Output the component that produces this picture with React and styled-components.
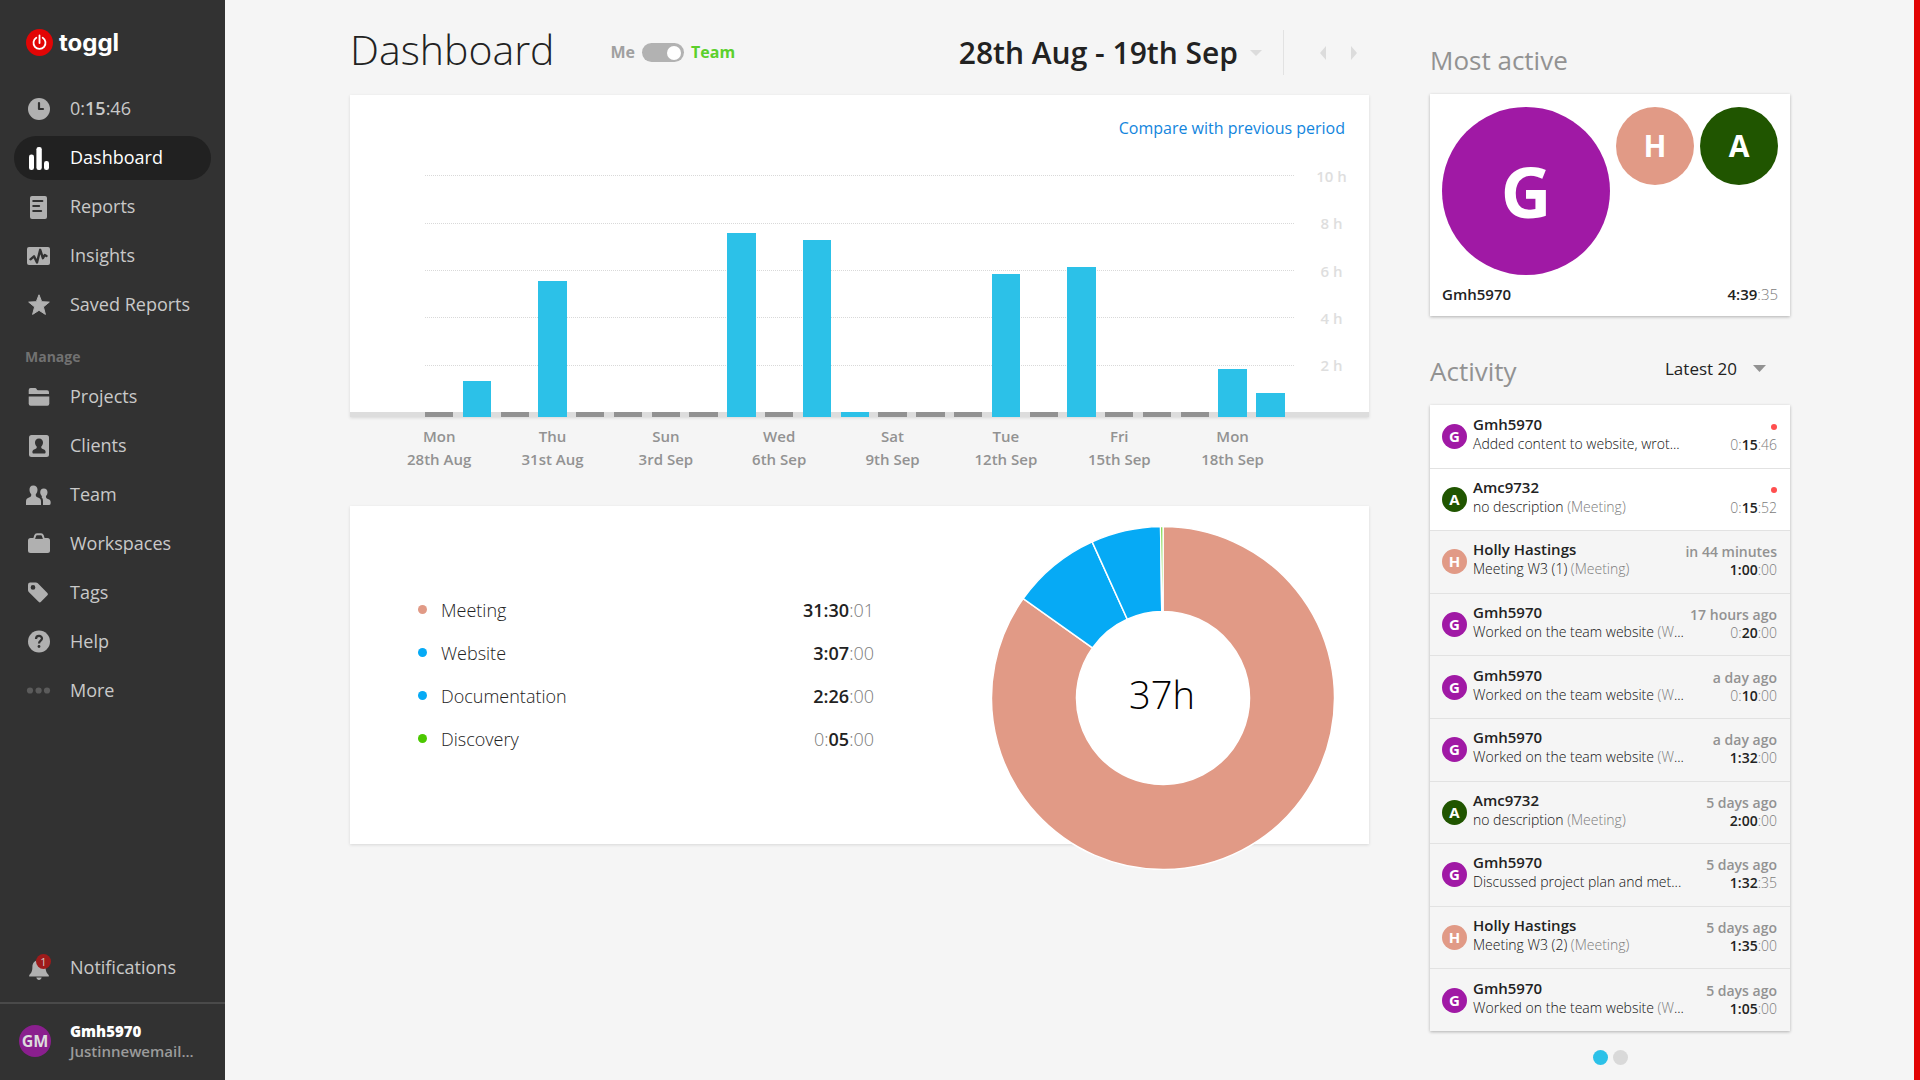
import React, { useState } from "react";
import styled, { createGlobalStyle } from "styled-components";

const GlobalStyle = createGlobalStyle`
  *, *::before, *::after { box-sizing: border-box; }
  body {
    margin: 0;
    background: #f5f5f5;
    color: #222;
    font-family: "Open Sans", "Noto Sans", sans-serif;
    font-size: 18px;
  }
  button, select, input { font: inherit; color: inherit; margin: 0; }
  button { border: 0; padding: 0; background: none; cursor: pointer; }
  h1, h2, p, ul, ol { margin: 0; padding: 0; font-weight: inherit; }
  ul, ol { list-style: none; }
  a { text-decoration: none; color: inherit; }
  svg { display: block; }
`;

const Page = styled.div`
  display: flex;
  min-height: 100vh;
  border-right: 6px solid #e20505;
`;

/* Sidebar */

const Sidebar = styled.nav`
  flex: 0 0 225px;
  display: flex;
  flex-direction: column;
  background: #323232;
  color: #c9c9c9;
`;

const Brand = styled.a`
  display: flex;
  align-items: center;
  gap: 6px;
  padding: 29px 26px 31px;
  color: #fff;
  font: 700 24px/27px Inter, "Open Sans", sans-serif;
`;

const NavList = styled.ul`
  display: flex;
  flex-direction: column;
  gap: 5px;
  margin: 0 14px;
`;

const NavLink = styled.a`
  display: flex;
  align-items: center;
  gap: 19px;
  height: 44px;
  padding: 0 13px;
  border-radius: 22px;
  line-height: 24px;
  white-space: nowrap;
  background: ${(p) => (p.$active ? "#212121" : "transparent")};
  color: ${(p) => (p.$active ? "#fff" : "inherit")};
`;

const NavLabel = styled.span`
  padding-bottom: 2px;
`;

const NavIcon = styled.svg`
  flex: none;
  width: 24px;
  height: 24px;
  overflow: visible;
  color: ${(p) => (p.$active ? "#fff" : p.$dim ? "#5b5b5b" : "#b0b0b0")};
`;

const NavHeading = styled.h2`
  padding: 20px 25px 8px;
  color: #717171;
  font-size: 14px;
  font-weight: 700;
  line-height: 20px;
`;

const Strong = styled.b`
  font-weight: 600;
`;

const SidebarFoot = styled.div`
  margin-top: auto;
`;

const IconHolder = styled.span`
  position: relative;
`;

const Count = styled.span`
  position: absolute;
  top: -2px;
  right: 0;
  width: 15px;
  height: 15px;
  border-radius: 50%;
  background: #9e1b1b;
  color: #d5c5c5;
  font-size: 11px;
  line-height: 15px;
  text-align: center;
`;

const Account = styled.a`
  display: flex;
  align-items: center;
  gap: 19px;
  margin-top: 12px;
  padding: 17px 19px 19px;
  border-top: 2px solid #4a4a4a;
  color: #9b9b9b;
  font-size: 15px;
  font-weight: 600;
  line-height: 20px;
`;

const AccountName = styled.b`
  display: block;
  color: #fff;
`;

/* Shared */

const Avatar = styled.span`
  flex: none;
  display: flex;
  align-items: center;
  justify-content: center;
  width: ${(p) => p.$size}px;
  height: ${(p) => p.$size}px;
  border-radius: 50%;
  background: ${(p) => p.$color};
  color: ${(p) => p.$ink || "#fff"};
  font-size: ${(p) => p.$font}px;
  font-weight: 700;
  line-height: 1;
`;

const Muted = styled.span`
  color: #7c7c7c;
  font-weight: 300;
`;

/* Main column */

const Content = styled.main`
  flex: 1;
  display: flex;
  align-items: flex-start;
  gap: 61px;
  min-width: 0;
  padding: 0 124px 15px 125px;
`;

const Report = styled.section`
  flex: 1;
  min-width: 0;
`;

const Header = styled.header`
  display: flex;
  align-items: center;
  height: 95px;
  padding: 10px 12px 0 0;
`;

const Title = styled.h1`
  padding-bottom: 8px;
  font-size: 41px;
  font-weight: 300;
  line-height: 48px;
`;

const Scope = styled.label`
  display: flex;
  align-items: center;
  gap: 7px;
  margin-left: 56px;
  font-size: 16px;
  font-weight: 700;
  line-height: 22px;
`;

const Switch = styled.input`
  appearance: none;
  display: flex;
  align-items: center;
  justify-content: flex-end;
  width: 42px;
  height: 19px;
  padding: 0 3px;
  border-radius: 10px;
  background: #b2b2b2;
  &:not(:checked) { justify-content: flex-start; }
  &::before {
    content: "";
    width: 14px;
    height: 14px;
    border-radius: 50%;
    background: #fff;
  }
`;

const ScopeName = styled.span`
  padding-bottom: 2px;
  color: ${(p) => (p.$on ? "#5bd02c" : "#a0a0a0")};
`;

const Period = styled.button`
  display: flex;
  align-items: center;
  gap: 12px;
  margin-left: auto;
  padding-top: 1px;
  font-size: 30px;
  font-weight: 600;
  line-height: 40px;
  color: #222;
`;

const Steps = styled.div`
  display: flex;
  align-items: center;
  gap: 25px;
  height: 45px;
  margin-left: 21px;
  padding-left: 36px;
  border-left: 1px solid #e2e2e2;
  color: #dcdcdc;
`;

const Panel = styled.div`
  background: #fff;
  box-shadow: 0 1px 3px rgba(0, 0, 0, ${(p) => (p.$deep ? 0.28 : 0.12)});
`;

const CompareRow = styled.div`
  display: flex;
  justify-content: flex-end;
  height: 57px;
  padding: 21px 24px 0 0;
`;

const CompareLink = styled.a`
  color: #1285dd;
  font-size: 16px;
  line-height: 24px;
`;

const Plot = styled.div`
  display: grid;
  grid-template-rows: 260px 5px;
  grid-template-columns: 75px minmax(0, 1fr) 75px;
`;

const GridLines = styled.div`
  grid-area: 1 / 2 / 2 / 4;
  display: flex;
  flex-direction: column;
  padding-bottom: 23px;
`;

const GridLine = styled.div`
  flex: 1;
  display: grid;
  grid-template-columns: minmax(0, 1fr) 75px;
  align-items: center;
  color: #dedede;
  font-size: 15px;
  font-weight: 600;
  line-height: 20px;
  text-align: center;
  &::before {
    content: "";
    border-top: 1px dotted #d9d9d9;
  }
`;

const Baseline = styled.div`
  grid-area: 2 / 1 / 3 / 4;
  background: #ddd;
`;

const dayColumns = `
  display: grid;
  grid-template-columns: repeat(23, minmax(0, 1fr));
`;

const Bars = styled.div`
  grid-area: 1 / 2 / 3 / 3;
  ${dayColumns}
  align-items: end;
`;

const Bar = styled.div`
  width: 75%;
  background: ${(p) => (p.$empty ? "#929292" : "#2cc1e8")};
`;

const DayLabels = styled.div`
  ${dayColumns}
  margin: 8px 75px 35px;
`;

const DayLabel = styled.div`
  grid-column: ${(p) => p.$day};
  width: 75%;
  display: flex;
  flex-direction: column;
  align-items: center;
  white-space: nowrap;
  color: #929292;
  font-size: 15px;
  font-weight: 600;
  line-height: 23px;
`;

const Breakdown = styled(Panel)`
  display: flex;
  align-items: center;
  height: 338px;
  padding: 0 34px 2px 68px;
  gap: 117px;
`;

const Legend = styled.table`
  flex: 1;
  border-collapse: collapse;
  font-weight: 300;
  line-height: 24px;
  th, td { height: 43px; padding: 0; }
  th { font-weight: 300; text-align: left; }
  td { text-align: right; }
`;

const LegendName = styled.span`
  display: flex;
  align-items: center;
  gap: 14px;
  &::before {
    content: "";
    width: 9px;
    height: 9px;
    border-radius: 50%;
    background: ${(p) => p.$color};
  }
`;

const Donut = styled.svg`
  flex: none;
  align-self: flex-start;
  width: 344px;
  height: 344px;
  margin-top: 20px;
`;

const Slice = styled.path`
  fill: ${(p) => p.$color};
  stroke: #fff;
  stroke-width: 1.5;
`;

const DonutTotal = styled.text`
  fill: #000;
  font-size: 38px;
  font-weight: 300;
  text-anchor: middle;
`;

/* Team column */

const TeamColumn = styled.aside`
  flex: 0 0 360px;
`;

const SectionHead = styled.div`
  display: flex;
  align-items: center;
  justify-content: space-between;
  height: 36px;
  margin: ${(p) => (p.$first ? 41 : 36)}px 24px 17px 0;
`;

const SectionTitle = styled.h2`
  padding-top: 2px;
  color: #929292;
  font-size: 26px;
  font-weight: 400;
  line-height: 34px;
`;

const People = styled(Panel)`
  padding: 13px 12px 12px;
`;

const PeopleRow = styled.div`
  display: flex;
  align-items: flex-start;
  gap: 6px;
`;

const Leader = styled.div`
  display: flex;
  justify-content: space-between;
  margin-top: 9px;
  font-size: 15px;
  font-weight: 600;
  line-height: 20px;
`;

const Picker = styled.label`
  position: relative;
  color: #929292;
`;

const PickerSelect = styled.select`
  appearance: none;
  display: block;
  width: 101px;
  height: 26px;
  padding: 0 0 2px;
  border: 0;
  background: none;
  color: #222;
  font-size: 17px;
  line-height: 24px;
`;

const PickerCaret = styled.svg`
  position: absolute;
  right: 0;
  top: 8px;
  pointer-events: none;
`;

const Feed = styled(Panel).attrs({ as: "ul" })`
  display: grid;
  grid-auto-rows: 1fr;
  min-height: 626px;
`;

const Entry = styled.li`
  display: grid;
  grid-template-columns: 25px minmax(0, 1fr) auto;
  align-items: center;
  gap: 6px;
  padding: 0 13px 0 12px;
  background: ${(p) => (p.$live ? "#fff" : "#f5f5f5")};
  font-size: 14px;
  line-height: 19px;
  white-space: nowrap;
  & + & { border-top: 1px solid #e2e2e2; }
`;

const EntryText = styled.div`
  padding-bottom: 5px;
  color: #111;
  font-weight: 300;
`;

const EntryUser = styled.p`
  color: #222;
  font-size: 15px;
  font-weight: 600;
`;

const EntrySide = styled.div`
  display: flex;
  flex-direction: column;
  align-items: flex-end;
  padding-bottom: 1px;
  line-height: 18px;
  font-weight: 600;
`;

const EntryWhen = styled.span`
  display: flex;
  align-items: center;
  height: 18px;
  color: #929292;
`;

const LiveDot = styled.span`
  width: 6px;
  height: 6px;
  border-radius: 50%;
  background: #ff4f4f;
`;

const Pager = styled.div`
  display: flex;
  justify-content: center;
  gap: 5px;
  margin-top: 19px;
`;

const PageDot = styled.button`
  width: 15px;
  height: 15px;
  border-radius: 50%;
  background: ${(p) => (p.$on ? "#2cc1e8" : "#d9d9d9")};
`;

/* Data */

const PURPLE = "#a019a5";
const SALMON = "#e19a86";
const GREEN = "#205500";

const days = [0, 36, 0, 136, 0, 0, 0, 0, 184, 0, 177, 5, 0, 0, 0, 143, 0, 150, 0, 0, 0, 48, 24];

const dayNames = [
  ["Mon", "28th Aug"],
  ["Thu", "31st Aug"],
  ["Sun", "3rd Sep"],
  ["Wed", "6th Sep"],
  ["Sat", "9th Sep"],
  ["Tue", "12th Sep"],
  ["Fri", "15th Sep"],
  ["Mon", "18th Sep"],
];

const projects = [
  { name: "Meeting", color: SALMON, time: "31:30:01", seconds: 113401 },
  { name: "Website", color: "#06aaf5", time: "3:07:00", seconds: 11220 },
  { name: "Documentation", color: "#06aaf5", time: "2:26:00", seconds: 8760 },
  { name: "Discovery", color: "#4bc800", time: "0:05:00", seconds: 300 },
];

const users = {
  G: { name: "Gmh5970", color: PURPLE },
  A: { name: "Amc9732", color: GREEN },
  H: { name: "Holly Hastings", color: SALMON },
};

const entries = [
  { user: "G", text: "Added content to website, wrot...", time: "0:15:46" },
  { user: "A", text: "no description", project: "(Meeting)", time: "0:15:52" },
  { user: "H", text: "Meeting W3 (1)", project: "(Meeting)", when: "in 44 minutes", time: "1:00:00" },
  { user: "G", text: "Worked on the team website", project: "(W", cut: true, when: "17 hours ago", time: "0:20:00" },
  { user: "G", text: "Worked on the team website", project: "(W", cut: true, when: "a day ago", time: "0:10:00" },
  { user: "G", text: "Worked on the team website", project: "(W", cut: true, when: "a day ago", time: "1:32:00" },
  { user: "A", text: "no description", project: "(Meeting)", when: "5 days ago", time: "2:00:00" },
  { user: "G", text: "Discussed project plan and met...", when: "5 days ago", time: "1:32:35" },
  { user: "H", text: "Meeting W3 (2)", project: "(Meeting)", when: "5 days ago", time: "1:35:00" },
  { user: "G", text: "Worked on the team website", project: "(W", cut: true, when: "5 days ago", time: "1:05:00" },
];

/* Icons */

const ink = "#323232";

const icons = {
  clock: (
    <>
      <circle cx="12" cy="12" r="11" fill="currentColor" />
      <path d="M12 6v6h4" fill="none" stroke={ink} strokeWidth="2.2" strokeLinecap="round" strokeLinejoin="round" />
    </>
  ),
  dashboard: (
    <g fill="currentColor">
      <rect x="2" y="8.5" width="5" height="15.5" rx="2.3" />
      <rect x="9.4" y="1" width="5.4" height="23" rx="2.3" />
      <rect x="17" y="15" width="5" height="9" rx="2.3" />
    </g>
  ),
  reports: (
    <>
      <rect x="3" y="1" width="17" height="23" rx="2" fill="currentColor" />
      <path d="M6.3 6h9M6.3 11h5.8M6.3 16h7.8" stroke={ink} strokeWidth="2.2" strokeLinecap="round" />
    </>
  ),
  insights: (
    <>
      <rect x="0" y="3" width="23" height="18" rx="2" fill="currentColor" />
      <path d="M3.5 15.3 7 12.3l3 6.2 3.2-12.7 2.7 8.4 1.8-3.2 1.8 1" fill="none" stroke={ink} strokeWidth="2.4" strokeLinecap="round" strokeLinejoin="round" />
    </>
  ),
  star: (
    <path d="M12 1.8l2.7 6.9 7.6.4-5.9 4.8 2 7.5L12 17.3l-6.4 4.1 2-7.5-5.9-4.8 7.6-.4z" fill="currentColor" stroke="currentColor" strokeLinejoin="round" />
  ),
  folder: (
    <g fill="currentColor">
      <path d="M1.7 9V5A2 2 0 0 1 3.7 3H8q1.3 0 1.7 1.2.3 1 1.3 1h9A2 2 0 0 1 22 7.3V9z" />
      <path d="M1.7 11.5H22.3V18.7a2 2 0 0 1-2 2H3.7a2 2 0 0 1-2-2z" />
    </g>
  ),
  client: (
    <>
      <rect x="2" y="1" width="20" height="22" rx="2.5" fill="currentColor" />
      <path d="M12 4.5c2.6 0 4 1.8 4 4.1 0 1.7-.7 3-1.7 3.9-.3 1.5.3 2.1 2 2.7 1.9.7 2.3 1.6 2.3 2.8 0 1-.4 1.5-1.3 1.5H6.7c-.9 0-1.3-.5-1.3-1.5 0-1.2.4-2.1 2.3-2.8 1.7-.6 2.3-1.2 2-2.7C8.7 11.6 8 10.3 8 8.6c0-2.3 1.4-4.1 4-4.1z" fill={ink} />
    </>
  ),
  team: (
    <g fill="currentColor">
      <path d="M6.3 2.5c2.7 0 4.2 1.9 4.2 4.3 0 1.8-.6 3.4-1.7 4.4-.3 1.7.3 2.5 2.2 3.2 2.4.9 3 2 3 4.3V22H-1v-3.3c0-2.3.6-3.4 3-4.3 1.9-.7 2.5-1.5 2.2-3.2-1.1-1-1.7-2.6-1.7-4.4 0-2.4 1.1-4.3 3.8-4.3z" />
      <path d="M16.8 5.6c2.4 0 3.7 1.7 3.7 3.7 0 1.5-.6 2.9-1.5 3.8-.3 1.6.3 2.2 1.9 2.9 2 .8 2.8 1.5 2.8 3.5 0 1.7-.5 2.5-1.5 2.5H16v-4c0-2-.6-3-1.4-3.8.4-.6.3-.7.1-1.3-.9-.9-1.5-2.1-1.5-3.6 0-2 1.2-3.7 3.6-3.7z" />
    </g>
  ),
  briefcase: (
    <>
      <rect x="1" y="6" width="22" height="15" rx="2.5" fill="currentColor" />
      <path d="M7 7.500l1.200-4A2 2 0 0 1 10 2.200h4a2 2 0 0 1 1.800 1.300l1.200 4" fill="none" stroke="currentColor" strokeWidth="2" />
      <path d="M8.200 6.400h7.600" stroke={ink} strokeWidth="1" />
    </>
  ),
  tag: (
    <path d="M3.2 1.500h5.600q1.200 0 2 .8l9.600 9.600q1.200 1.200 0 2.400l-6.400 6.500q-1.200 1.200-2.400 0L2 11.200q-1-1-1-2.200V3.700Q1 1.500 3.200 1.500zM6 4.100a2.300 2.300 0 1 0 0 4.700 2.300 2.300 0 0 0 0-4.700z" fill="currentColor" fillRule="evenodd" />
  ),
  help: (
    <>
      <circle cx="12" cy="11.5" r="11" fill="currentColor" />
      <path d="M9 9c0-4 6-4 6-.4 0 2.200-3 2-3 5" fill="none" stroke={ink} strokeWidth="2.200" />
      <circle cx="12" cy="16.5" r="1.400" fill={ink} />
    </>
  ),
  more: (
    <g fill="currentColor">
      <circle cx="3" cy="11.500" r="3.100" />
      <circle cx="11.600" cy="11.500" r="3.100" />
      <circle cx="20" cy="11.500" r="3.100" />
    </g>
  ),
  bell: (
    <path d="M12 4c4 0 6.600 3 6.600 6.800 0 4.600 1 6.200 3.200 8.400v1.200H2.200v-1.200c2.200-2.200 3.200-3.800 3.200-8.400C5.400 7 8 4 12 4zM9.300 21.600h5.400c-.4 1.600-1.400 2.400-2.700 2.400s-2.300-.8-2.700-2.400z" fill="currentColor" />
  ),
};

function Icon({ name, active }) {
  return (
    <NavIcon viewBox="0 0 24 24" $active={active} $dim={name === "more"} aria-hidden="true">
      {icons[name]}
    </NavIcon>
  );
}

function NavItem({ icon, active, count, children }) {
  return (
    <li>
      <NavLink href="#" $active={active} aria-current={active ? "page" : undefined}>
        <IconHolder>
          <Icon name={icon} active={active} />
          {count && <Count>{count}</Count>}
        </IconHolder>
        <NavLabel>{children}</NavLabel>
      </NavLink>
    </li>
  );
}

/* Hours and minutes are emphasised; a zero hour and the seconds are muted. */
function Duration({ value }) {
  const [h, m, s] = value.split(":");
  return h === "0" ? (
    <span>
      <Muted>0:</Muted>
      <Strong>{m}</Strong>
      <Muted>:{s}</Muted>
    </span>
  ) : (
    <span>
      <Strong>
        {h}:{m}
      </Strong>
      <Muted>:{s}</Muted>
    </span>
  );
}

function slices() {
  const total = projects.reduce((sum, p) => sum + p.seconds, 0);
  const point = (r, t) => {
    const a = t * 2 * Math.PI;
    return `${(172 + r * Math.sin(a)).toFixed(2)} ${(172 - r * Math.cos(a)).toFixed(2)}`;
  };
  let from = 0;
  return projects.map((p) => {
    const to = from + p.seconds / total;
    const big = to - from > 0.5 ? 1 : 0;
    const d = `M${point(171.5, from)}A171.5 171.5 0 ${big} 1 ${point(171.5, to)}L${point(86.5, to)}A86.5 86.5 0 ${big} 0 ${point(86.5, from)}z`;
    from = to;
    return <Slice key={p.name} d={d} $color={p.color} />;
  });
}

export default function App() {
  const [team, setTeam] = useState(true);
  const [page, setPage] = useState(0);

  return (
    <Page>
      <GlobalStyle />
      <Sidebar>
        <Brand href="#">
          <svg width="27" height="27" viewBox="0 0 27 27" aria-hidden="true">
            <circle cx="13.5" cy="13.5" r="13.5" fill="#e20505" />
            <path d="M10.3 8.8a6 6 0 1 0 6.4 0M13.5 6.5v7.5" fill="none" stroke="#fff" strokeWidth="1.8" strokeLinecap="round" />
          </svg>
          toggl
        </Brand>
        <NavList>
          <NavItem icon="clock">
            0:<Strong>15</Strong>:46
          </NavItem>
          <NavItem icon="dashboard" active>
            Dashboard
          </NavItem>
          <NavItem icon="reports">Reports</NavItem>
          <NavItem icon="insights">Insights</NavItem>
          <NavItem icon="star">Saved Reports</NavItem>
        </NavList>
        <NavHeading>Manage</NavHeading>
        <NavList>
          <NavItem icon="folder">Projects</NavItem>
          <NavItem icon="client">Clients</NavItem>
          <NavItem icon="team">Team</NavItem>
          <NavItem icon="briefcase">Workspaces</NavItem>
          <NavItem icon="tag">Tags</NavItem>
          <NavItem icon="help">Help</NavItem>
          <NavItem icon="more">More</NavItem>
        </NavList>
        <SidebarFoot>
          <NavList>
            <NavItem icon="bell" count="1">
              Notifications
            </NavItem>
          </NavList>
          <Account href="#">
            <Avatar $size={32} $font={16} $color="#8a1f8e" $ink="#ddd">
              GM
            </Avatar>
            <span>
              <AccountName>Gmh5970</AccountName>
              Justinnewemail...
            </span>
          </Account>
        </SidebarFoot>
      </Sidebar>

      <Content>
        <Report>
          <Header>
            <Title>Dashboard</Title>
            <Scope>
              <ScopeName>Me</ScopeName>
              <Switch type="checkbox" checked={team} onChange={(e) => setTeam(e.target.checked)} />
              <ScopeName $on>Team</ScopeName>
            </Scope>
            <Period type="button">
              28th Aug - 19th Sep
              <svg width="12" height="6" viewBox="0 0 12 6" aria-hidden="true">
                <path d="M0 0h12L6 6z" fill="#dcdcdc" />
              </svg>
            </Period>
            <Steps>
              <button type="button" aria-label="Previous period">
                <svg width="6" height="14" viewBox="0 0 6 14">
                  <path d="M6 0v14L0 7z" fill="currentColor" />
                </svg>
              </button>
              <button type="button" aria-label="Next period">
                <svg width="6" height="14" viewBox="0 0 6 14">
                  <path d="M0 0v14l6-7z" fill="currentColor" />
                </svg>
              </button>
            </Steps>
          </Header>

          <Panel>
            <CompareRow>
              <CompareLink href="#">Compare with previous period</CompareLink>
            </CompareRow>
            <Plot>
              <GridLines>
                {[10, 8, 6, 4, 2].map((h) => (
                  <GridLine key={h}>{h} h</GridLine>
                ))}
              </GridLines>
              <Baseline />
              <Bars>
                {days.map((height, i) => (
                  <Bar key={i} $empty={!height} style={{ height: height || 5 }} />
                ))}
              </Bars>
            </Plot>
          </Panel>
          <DayLabels>
            {dayNames.map(([day, date], i) => (
              <DayLabel key={date} $day={i * 3 + 1}>
                <span>{day}</span>
                <span>{date}</span>
              </DayLabel>
            ))}
          </DayLabels>

          <Breakdown>
            <Legend>
              <tbody>
                {projects.map((p) => (
                  <tr key={p.name}>
                    <th scope="row">
                      <LegendName $color={p.color}>{p.name}</LegendName>
                    </th>
                    <td>
                      <Duration value={p.time} />
                    </td>
                  </tr>
                ))}
              </tbody>
            </Legend>
            <Donut viewBox="0 0 344 344">
              {slices()}
              <DonutTotal x="171" y="183">
                37h
              </DonutTotal>
            </Donut>
          </Breakdown>
        </Report>

        <TeamColumn>
          <SectionHead $first>
            <SectionTitle>Most active</SectionTitle>
          </SectionHead>
          <People $deep>
            <PeopleRow>
              <Avatar $size={168} $font={70} $color={PURPLE}>
                G
              </Avatar>
              <Avatar $size={78} $font={30} $color={SALMON}>
                H
              </Avatar>
              <Avatar $size={78} $font={30} $color={GREEN}>
                A
              </Avatar>
            </PeopleRow>
            <Leader>
              <span>Gmh5970</span>
              <Duration value="4:39:35" />
            </Leader>
          </People>

          <SectionHead>
            <SectionTitle>Activity</SectionTitle>
            <Picker>
              <PickerSelect aria-label="Activity range" defaultValue="20">
                <option value="20">Latest 20</option>
              </PickerSelect>
              <PickerCaret width="13" height="7" viewBox="0 0 13 7" aria-hidden="true">
                <path d="M0 0h13L6.5 7z" fill="currentColor" />
              </PickerCaret>
            </Picker>
          </SectionHead>
          <Feed $deep>
            {entries.map((e, i) => (
              <Entry key={i} $live={!e.when}>
                <Avatar $size={25} $font={15} $color={users[e.user].color}>
                  {e.user}
                </Avatar>
                <EntryText>
                  <EntryUser>{users[e.user].name}</EntryUser>
                  <p>
                    {e.text} <Muted>{e.project}</Muted>
                    {e.cut && "..."}
                  </p>
                </EntryText>
                <EntrySide>
                  <EntryWhen>{e.when || <LiveDot />}</EntryWhen>
                  <Duration value={e.time} />
                </EntrySide>
              </Entry>
            ))}
          </Feed>
          <Pager>
            {[0, 1].map((n) => (
              <PageDot key={n} type="button" $on={page === n} onClick={() => setPage(n)} aria-label={`Page ${n + 1}`} />
            ))}
          </Pager>
        </TeamColumn>
      </Content>
    </Page>
  );
}
